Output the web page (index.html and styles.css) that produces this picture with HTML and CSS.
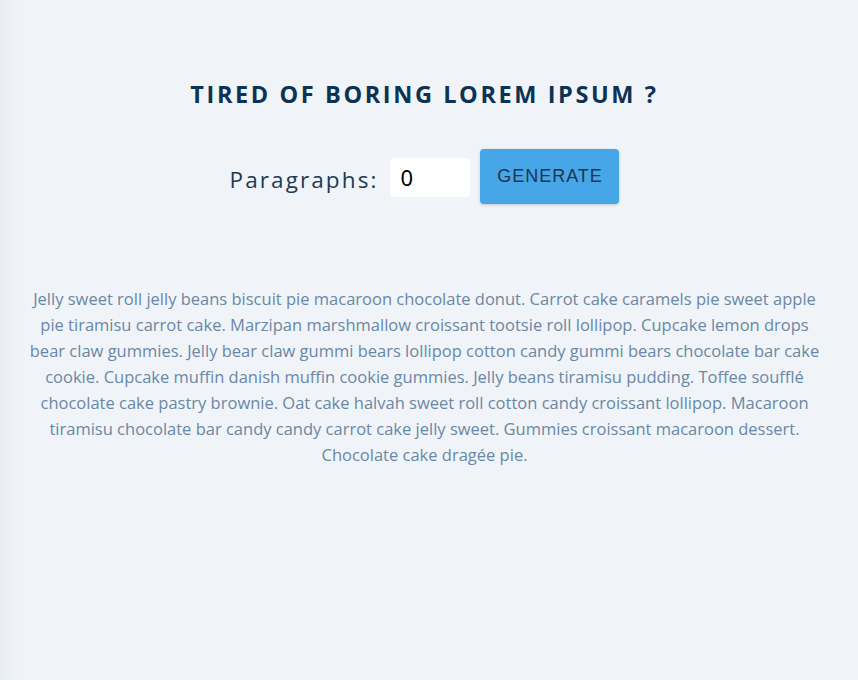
FILE: index.html
```html
<!DOCTYPE html>
<html>
<head>
<meta charset="utf-8">
<link rel="stylesheet" href="styles.css">
</head>
<body>
<main class="page">
  <h1 class="title">TIRED OF BORING LOREM IPSUM ?</h1>
  <form class="controls">
    <label class="label" for="amount">Paragraphs:</label>
    <input class="amount" id="amount" type="number" value="0">
    <button class="btn" type="button">GENERATE</button>
  </form>
  <p class="text">Jelly sweet roll jelly beans biscuit pie macaroon chocolate donut. Carrot cake caramels pie sweet apple pie tiramisu carrot cake. Marzipan marshmallow croissant tootsie roll lollipop. Cupcake lemon drops bear claw gummies. Jelly bear claw gummi bears lollipop cotton candy gummi bears chocolate bar cake cookie. Cupcake muffin danish muffin cookie gummies. Jelly beans tiramisu pudding. Toffee soufflé chocolate cake pastry brownie. Oat cake halvah sweet roll cotton candy croissant lollipop. Macaroon tiramisu chocolate bar candy candy carrot cake jelly sweet. Gummies croissant macaroon dessert. Chocolate cake dragée pie.</p>
</main>
</body>
</html>
```
FILE: styles.css
```css
html, body {
  margin: 0;
  height: 100%;
}
body {
  background: linear-gradient(to right, #e8edf2 0, #eef2f6 12px, #f0f4f8 26px);
  font-family: "Open Sans", "Noto Sans", sans-serif;
  color: #0b3558;
}
.page {
  padding-top: 76px;
  padding-right: 9px;
  text-align: center;
}
.title {
  margin: 0;
  font-size: 23.5px;
  font-weight: 700;
  letter-spacing: 2.6px;
  color: #0c3354;
  line-height: 36px;
}
.controls {
  margin-top: 37px;
  display: flex;
  justify-content: center;
  align-items: center;
  gap: 10px;
}
.label {
  font-size: 22.5px;
  letter-spacing: 2.1px;
  color: #1c3b55;
  margin-right: 2px;
  margin-top: 4px;
}
.amount {
  width: 80px;
  height: 39px;
  box-sizing: border-box;
  border: none;
  border-radius: 4px;
  background: #fff;
  padding: 0 10px;
  font-family: "Noto Sans", sans-serif;
  font-size: 22px;
  color: #000;
  outline: none;
  -moz-appearance: textfield;
}
.amount::-webkit-inner-spin-button,
.amount::-webkit-outer-spin-button {
  -webkit-appearance: none;
  margin: 0;
}
.btn {
  width: 139px;
  height: 55px;
  border: none;
  border-radius: 4px;
  background: #47a6e8;
  box-shadow: 0 1px 3px rgba(0,0,0,0.2);
  font-family: "Liberation Sans", Arial, sans-serif;
  font-size: 18px;
  letter-spacing: 1px;
  color: #1c3550;
  margin-bottom: 1px;
}
.text {
  margin: 81px auto 0;
  max-width: 804px;
  padding: 0 20px;
  font-size: 16.5px;
  line-height: 26px;
  color: #6a87a5;
}
```
